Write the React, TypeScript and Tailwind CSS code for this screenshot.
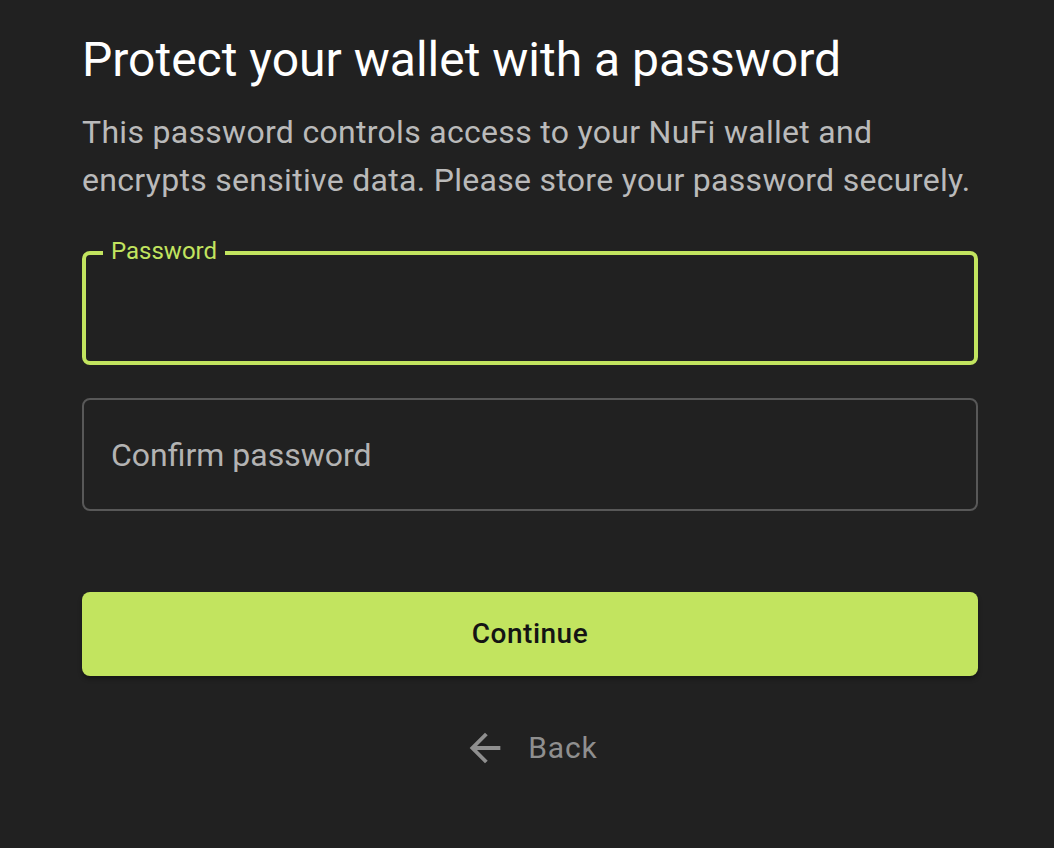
export default function App() {
  return (
    <div className="h-[848px] w-[1054px] overflow-hidden bg-[#212121] pl-[82px] font-['Roboto','Liberation_Sans',sans-serif]">
      <div className="w-[896px] pt-[28px]">
        <h1 className="text-[48px] leading-[64px] font-normal text-white">
          Protect your wallet with a password
        </h1>
        <p className="mt-[16px] text-[32px] leading-[48px] tracking-[0.3px] text-[#bababa]">
          This password controls access to your NuFi wallet and encrypts sensitive data. Please
          store your password securely.
        </p>

        <div className="relative mt-[47px]">
          <div className="h-[114px] rounded-[8px] border-[4px] border-[#c2e45f]" />
          <span className="absolute left-[21px] top-[-12px] bg-[#212121] px-[8px] text-[24px] leading-[24px] text-[#c2e45f]">
            Password
          </span>
        </div>

        <div className="mt-[33px] flex h-[113px] items-center rounded-[8px] border-2 border-[#585858] pl-[27px]">
          <span className="text-[32px] leading-[40px] text-[#b3b3b3]">Confirm password</span>
        </div>

        <button className="mt-[81px] flex h-[84px] w-full items-center justify-center rounded-[8px] bg-[#c2e45f] text-[28px] font-medium tracking-[0.5px] text-[#141414] shadow-[0_3px_4px_rgba(0,0,0,0.35)]">
          Continue
        </button>

        <div className="mt-[42px] flex h-[60px] items-center justify-center gap-[20px] text-[#8f8f8f]">
          <svg viewBox="0 0 24 24" className="h-[46px] w-[46px]" fill="currentColor">
            <path d="M20 11H7.83l5.59-5.59L12 4l-8 8 8 8 1.41-1.41L7.83 13H20v-2z" />
          </svg>
          <span className="text-[30px] leading-[36px] tracking-[0.86px]">Back</span>
        </div>
      </div>
    </div>
  );
}
